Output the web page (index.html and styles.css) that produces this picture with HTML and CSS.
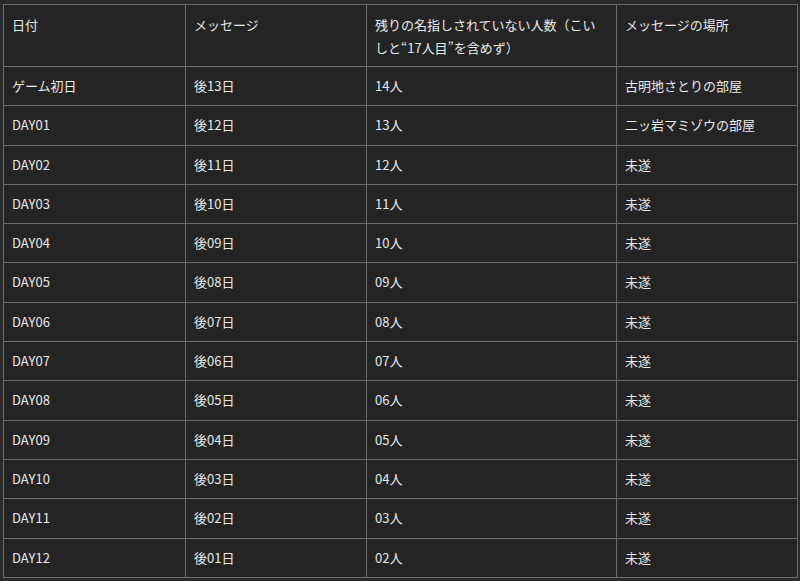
FILE: index.html
```html
<!DOCTYPE html>
<html lang="ja">
<head>
<meta charset="utf-8">
<title>メッセージ表</title>
<link rel="stylesheet" href="styles.css">
</head>
<body>
<table class="schedule">
  <colgroup>
    <col class="c1">
    <col class="c2">
    <col class="c3">
    <col class="c4">
  </colgroup>
  <thead>
    <tr>
      <th>日付</th>
      <th>メッセージ</th>
      <th>残りの名指しされていない人数（こいしと“17人目”を含めず）</th>
      <th>メッセージの場所</th>
    </tr>
  </thead>
  <tbody>
    <tr><td>ゲーム初日</td><td>後13日</td><td>14人</td><td>古明地さとりの部屋</td></tr>
    <tr><td>DAY01</td><td>後12日</td><td>13人</td><td>二ッ岩マミゾウの部屋</td></tr>
    <tr><td>DAY02</td><td>後11日</td><td>12人</td><td>未遂</td></tr>
    <tr><td>DAY03</td><td>後10日</td><td>11人</td><td>未遂</td></tr>
    <tr><td>DAY04</td><td>後09日</td><td>10人</td><td>未遂</td></tr>
    <tr><td>DAY05</td><td>後08日</td><td>09人</td><td>未遂</td></tr>
    <tr><td>DAY06</td><td>後07日</td><td>08人</td><td>未遂</td></tr>
    <tr><td>DAY07</td><td>後06日</td><td>07人</td><td>未遂</td></tr>
    <tr><td>DAY08</td><td>後05日</td><td>06人</td><td>未遂</td></tr>
    <tr><td>DAY09</td><td>後04日</td><td>05人</td><td>未遂</td></tr>
    <tr><td>DAY10</td><td>後03日</td><td>04人</td><td>未遂</td></tr>
    <tr><td>DAY11</td><td>後02日</td><td>03人</td><td>未遂</td></tr>
    <tr><td>DAY12</td><td>後01日</td><td>02人</td><td>未遂</td></tr>
  </tbody>
</table>
</body>
</html>
```
FILE: styles.css
```css
html, body {
  margin: 0;
  background: #2a2a2a;
}
body {
  padding: 4px 3px 0 3px;
  font-family: "Noto Sans CJK JP", "Noto Sans", sans-serif;
  font-size: 13px;
  color: #e8e8e8;
}
.schedule {
  width: 794px;
  table-layout: fixed;
  border-collapse: collapse;
  background: #242424;
  border: 1px solid #6c6c6c;
}
.c1 { width: 182px; }
.c2 { width: 181px; }
.c3 { width: 250px; }
.c4 { width: 181px; }
.schedule th,
.schedule td {
  border: 1px solid #6c6c6c;
  text-align: left;
  vertical-align: top;
  font-weight: normal;
  padding: 8px 10px 8.3px 8px;
  line-height: 22px;
}
.schedule th {
  padding-top: 8px;
  padding-bottom: 7px;
  line-height: 23px;
}
```
